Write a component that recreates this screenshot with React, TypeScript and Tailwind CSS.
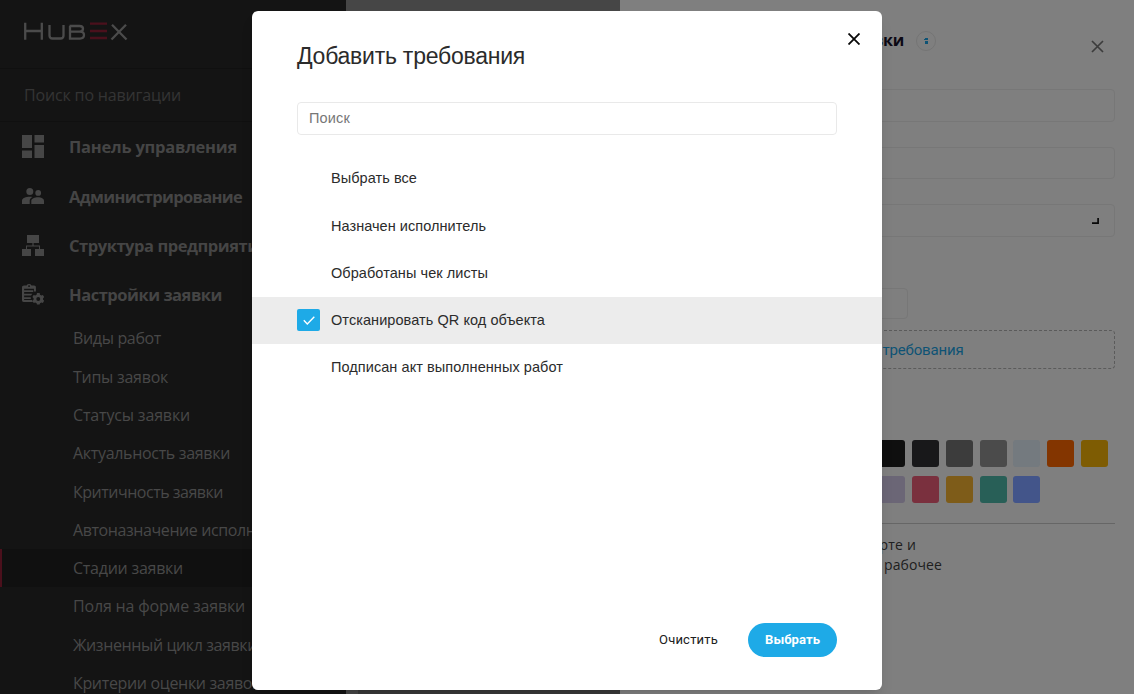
import React from "react";

const sections = [
  { label: "Панель управления", icon: "dashboard", width: 168 },
  { label: "Администрирование", icon: "people", width: 173 },
  { label: "Структура предприятия", icon: "structure", width: 199 },
  { label: "Настройки заявки", icon: "settings", width: 153 },
];

const links = [
  { label: "Виды работ", width: 88 },
  { label: "Типы заявок", width: 95 },
  { label: "Статусы заявки", width: 117 },
  { label: "Актуальность заявки", width: 157 },
  { label: "Критичность заявки", width: 150 },
  { label: "Автоназначение исполнителя", width: 225 },
  { label: "Стадии заявки", width: 110, active: true },
  { label: "Поля на форме заявки", width: 172 },
  { label: "Жизненный цикл заявки", width: 184 },
  { label: "Критерии оценки заявок", width: 187 },
];

const requirements = [
  { label: "Выбрать все", width: 86 },
  { label: "Назначен исполнитель", width: 155 },
  { label: "Обработаны чек листы", width: 157 },
  { label: "Отсканировать QR код объекта", width: 214, checked: true },
  { label: "Подписан акт выполненных работ", width: 232 },
];

const swatches = [
  ["bg-[#0f0f0f]", "bg-[#18181a]", "bg-[#3c3c3c]", "bg-[#4b4b4b]", "bg-[#747a7f]", "bg-[#833500]", "bg-[#7e5c03]"],
  ["bg-[#6b6676]", "bg-[#7a303e]", "bg-[#7e5c19]", "bg-[#285f57]", "bg-[#43558a]"],
];

/** A single line of text set to a known advance width. */
function Line({ children, width, size, weight = 400, font = "Liberation Sans", fill = "currentColor" }: {
  children: string; width: number; size: number; weight?: number; font?: string; fill?: string;
}) {
  const ref = React.useRef<HTMLSpanElement>(null);
  const [spacing, setSpacing] = React.useState(0);
  React.useLayoutEffect(() => {
    const el = ref.current;
    if (el) setSpacing((width - el.getBoundingClientRect().width) / children.length);
  }, [children, width]);
  return (
    <span
      ref={ref}
      className="inline-block whitespace-nowrap"
      style={{ letterSpacing: spacing, fontSize: size, fontWeight: weight, fontFamily: `"${font}", sans-serif`, color: fill }}
    >
      {children}
    </span>
  );
}

function SectionIcon({ name }: { name: string }) {
  return (
    <svg width="22" height="24" viewBox="0 0 22 24" fill="#464646" className="shrink-0 mb-px">
      {name === "dashboard" && <path d="M0 0h10v13H0zM12.500 0H22v7.500h-9.500zM0 15.500h10V23H0zM12.500 10H22v13h-9.500z" />}
      {name === "people" && (
        <path d="M7.800 4a3.300 3.300 0 1 0 0 7 3.300 3.300 0 0 0 0-7zM16.200 6a2.900 2.900 0 1 0 0 5.800 2.900 2.900 0 0 0 0-5.800zM0 20v-3.500C0 14 4 12.700 7.700 12.700c.9 0 1.900.1 2.800.3-2 1.100-2.800 2.300-2.800 4V20zM9.300 20v-3c0-2.400 3.500-3.700 6.700-3.700s6 1.300 6 3.700v3z" />
      )}
      {name === "structure" && <path d="M5 1h12v8h-5.400v2.500H18V15h4v7h-9v-7h4v-2.500H5V15h4v7H0v-7h4v-3.500h6.400V9H5z" />}
      {name === "settings" && (
        <g transform="translate(0 -1) scale(.98 .95)">
          <path d="M2 3.700h2.700a2.800 2.800 0 0 1 5 0h2.700c1 0 1.800.8 1.800 1.800V10h-2V7.200H2.200V19h8l1 2H1.500A1.500 1.500 0 0 1 0 19.500V5.500c0-1 .9-1.800 2-1.800z" />
          <path d="M2 8.700h9.500v1.900H2zM2 12.300h8.500l-1.300 1.900H2zM2 16h7v1.900H2z" />
          <circle cx="7.200" cy="4.300" r="1" fill="#141414" />
          <path fillRule="evenodd" d="M15.300 11.700h2.700l.4 1.600 1.400.8 1.500-.5 1.400 2.300-1.200 1.200v1.500l1.200 1.100-1.400 2.400-1.500-.5-1.400.8-.4 1.300h-2.700l-.4-1.300-1.400-.8-1.600.5-1.300-2.400 1.200-1.100v-1.500l-1.200-1.200 1.300-2.300 1.600.5 1.400-.8zm1.300 4.200a2 2 0 1 0 0 4 2 2 0 0 0 0-4z" />
        </g>
      )}
    </svg>
  );
}

function Logo() {
  return (
    <svg width="106" height="20" viewBox="0 0 106 20" fill="none" stroke="#4b4b4b" strokeWidth="2.300">
      <path d="M2.200 .8v17M18.800 .8v17M2.200 9h16.600" />
      <path d="M26.500 3v10.500q0 3 3 3h8q3 0 3-3V3" />
      <path d="M46.500 4h10q3.500 0 3.500 2.800t-3.500 2.800H47M57 9.600q4 0 4 3.500t-4 3.500H47V4" />
      <path stroke="#4b101c" d="M67 1.700h17M67 9h17M67 16h17" />
      <path d="M89 2.800l14.500 14.700M103 2.800L88.500 17.500" />
    </svg>
  );
}

function Sidebar() {
  return (
    <aside className="w-[346px] shrink-0 h-full bg-[#141414] overflow-hidden">
      <div className="h-[68px] pl-[23px] pt-[22px]"><Logo /></div>
      <div className="h-[54px] border-y border-[#101010] flex items-center pl-6 pb-px">
        <Line width={157} size={16} font="Open Sans" fill="#343434">Поиск по навигации</Line>
      </div>
      <div className="pt-px">
        {sections.map((s) => (
          <div key={s.label} className="h-[49.300px] flex items-center pl-[22px] gap-[25px]">
            <SectionIcon name={s.icon} />
            <Line width={s.width} size={16.500} weight={700} font="Open Sans" fill="#454545">{s.label}</Line>
          </div>
        ))}
      </div>
      <div className="-mt-px">
        {links.map((l) => (
          <div
            key={l.label}
            className={`h-[38.300px] flex items-center ${l.active ? "bg-[#101010] border-l-2 border-[#4b101c] pl-[71px]" : "pl-[73px]"}`}
          >
            <Line width={l.width} size={16} font="Open Sans" fill="#484848">{l.label}</Line>
          </div>
        ))}
      </div>
    </aside>
  );
}

function Field({ className, children }: { className: string; children?: React.ReactNode }) {
  return <div className={`border border-[#777777] rounded ${className}`}>{children}</div>;
}

function StagePanel() {
  return (
    <main className="flex-1 h-full bg-[#7f7f7f] pl-5 pr-[19px] overflow-hidden flex flex-col">
      <header className="h-[89px] shrink-0 flex justify-between pr-[11px]">
        <div className="flex pt-[31px] pl-[129px] gap-[12px]">
          <div className="w-[135px] flex justify-end -mt-[3px]">
            <Line width={121} size={16} weight={700} font="Open Sans" fill="#0c0914">Стадия заявки</Line>
          </div>
          <span className="size-5 rounded-full border border-[#757575] flex items-center justify-center">
            <svg width="4" height="6" viewBox="0 0 4 6" fill="#0e5375"><path d="M1 0h3v2H0V1h1zM1 3h3v3H1z" /></svg>
          </span>
        </div>
        <svg width="13" height="13" viewBox="0 0 13 13" className="mt-10" stroke="#3c3c3c" strokeWidth="1.700"><path d="M1 1l11 11M12 1L1 12" /></svg>
      </header>
      <Field className="h-[33px] shrink-0" />
      <Field className="h-8 mt-[25px] shrink-0" />
      <Field className="h-[33px] mt-[25px] shrink-0 flex items-center justify-end pr-[15px]">
        <svg width="7" height="6" viewBox="0 0 7 6" stroke="#080808" strokeWidth="1.700" fill="none"><path d="M0 5.100h6.100V0" /></svg>
      </Field>
      <Field className="h-[31px] w-[268px] mt-[51px] shrink-0" />
      <div className="h-[39px] mt-[11px] shrink-0 border border-dashed border-[#5b5b5b] rounded-sm flex items-center justify-center pl-[20px] pt-px">
        <Line width={152} size={15} font="Roboto" fill="#0e5375">Добавить требования</Line>
      </div>
      <div className="mt-[71px] grid gap-[9px]">
        {swatches.map((row, i) => (
          <div key={i} className="flex gap-[6.800px] pl-[238.200px]">
            {row.map((c) => <span key={c} className={`w-[27px] h-[27px] rounded-[3px] shrink-0 ${c}`} />)}
          </div>
        ))}
      </div>
      <div className="mt-5 border-t border-[#666666] pt-[10px] pl-[66px]">
        <div className="w-[210px] h-5 flex items-center justify-end"><Line width={160} size={14} font="Open Sans" fill="#202020">Показывать на карте и</Line></div>
        <div className="w-[236px] h-5 flex items-center justify-end"><Line width={135} size={14} font="Open Sans" fill="#202020">учитывать рабочее</Line></div>
      </div>
    </main>
  );
}

function Dialog() {
  return (
    <section className="absolute left-[252px] top-[11px] w-[630px] h-[679px] bg-white rounded-md overflow-hidden flex flex-col shadow-lg">
      <header className="h-[91px] shrink-0 flex justify-between pl-[45px] pr-[22px]">
        <h1 className="pt-[28px]"><Line width={228} size={23} fill="#2b2b2b">Добавить требования</Line></h1>
        <svg width="12" height="12" viewBox="0 0 12 12" className="mt-[22px]" stroke="#080808" strokeWidth="1.800"><path d="M.5.5l11 11M11.500.5l-11 11" /></svg>
      </header>
      <div className="mx-[45px] h-[33px] shrink-0 border border-[#e9e9e9] rounded flex items-center pl-[11px]">
        <Line width={41} size={14.500} fill="#777777">Поиск</Line>
      </div>
      <div className="pt-5">
        {requirements.map((r) => (
          <div key={r.label} className={`h-[47.200px] flex items-center pl-[45px] gap-[11px] ${r.checked ? "bg-[#ececec]" : ""}`}>
            <span className={`w-[23px] h-[22px] rounded-[2px] flex items-center justify-center ${r.checked ? "bg-[#1eaae7]" : ""}`}>
              {r.checked && <svg width="12" height="9" viewBox="0 0 12 9" fill="none" stroke="white" strokeWidth="1.400"><path d="M.8 4.300L4.300 8 11.300.8" /></svg>}
            </span>
            <span className="pt-[1.500px] flex"><Line width={r.width} size={14.500} fill="#2b2b2b">{r.label}</Line></span>
          </div>
        ))}
      </div>
      <footer className="mt-auto mb-[33px] pr-[45px] flex items-center justify-end gap-[30px]">
        <button className="pb-[4px]"><Line width={59} size={13} font="Roboto" fill="#202020">Очистить</Line></button>
        <button className="w-[89px] h-[34px] rounded-full bg-[#1eaae7] flex items-center justify-center">
          <Line width={55} size={13} weight={700} font="Roboto" fill="#ffffff">Выбрать</Line>
        </button>
      </footer>
    </section>
  );
}

export default function App() {
  return (
    <div className="relative w-[1134px] h-[694px] overflow-hidden flex bg-[#464646]">
      <Sidebar />
      <div className="w-[274px] shrink-0 flex items-end pl-3">
        <div className="h-1 w-full bg-[#393939]" />
      </div>
      <StagePanel />
      <Dialog />
    </div>
  );
}
